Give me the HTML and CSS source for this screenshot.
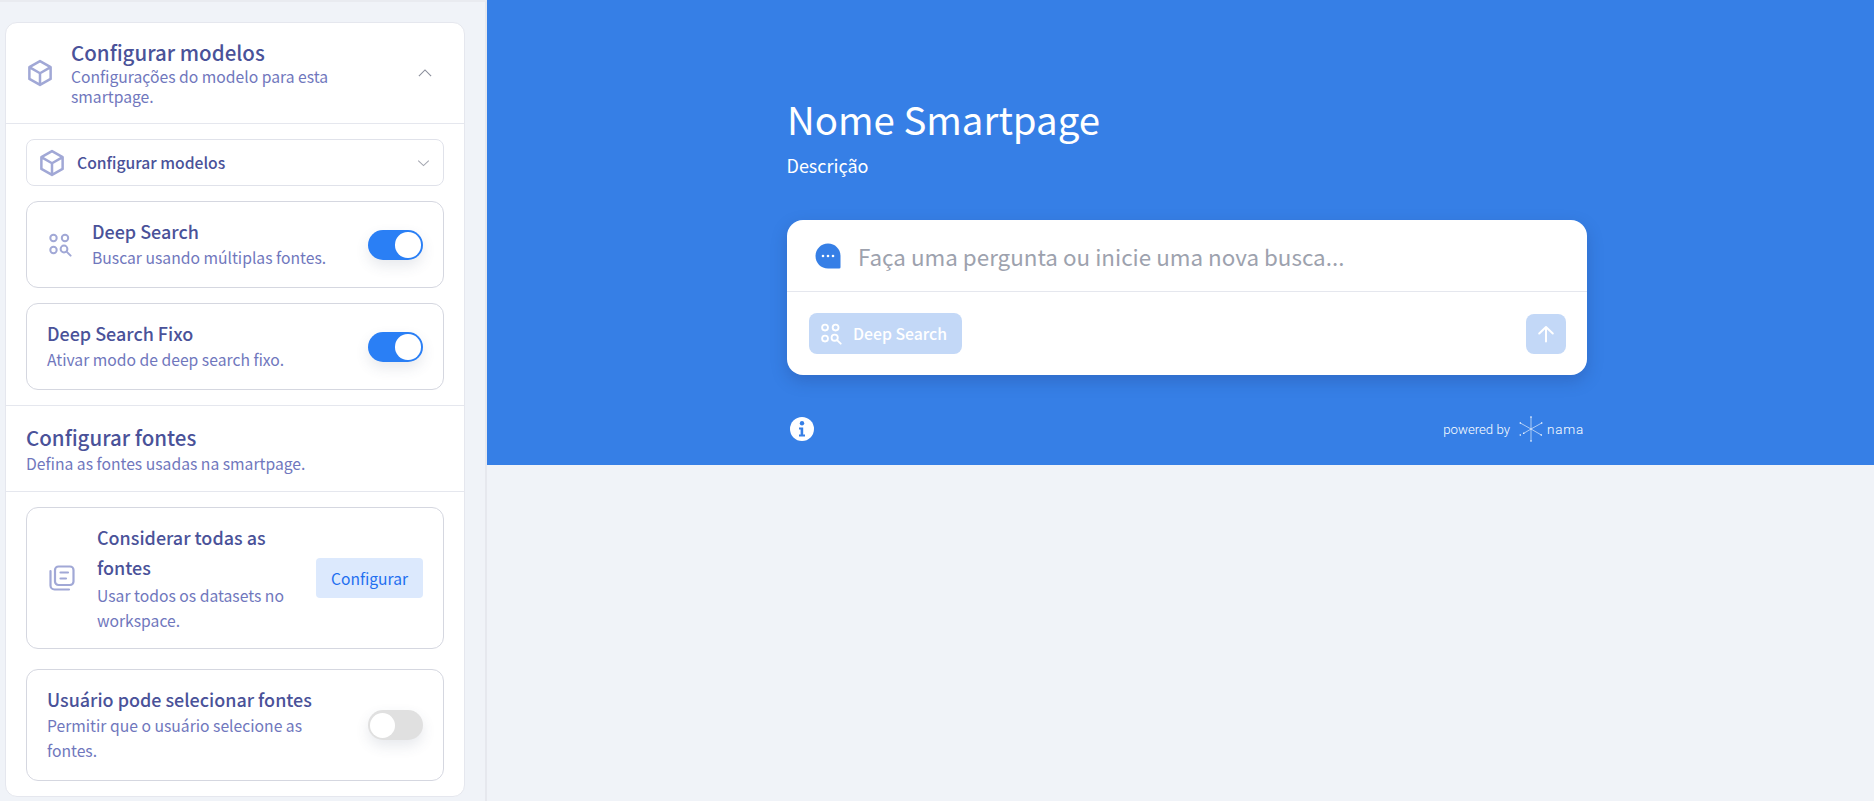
FILE: index.html
```html
<!DOCTYPE html>
<html lang="pt">
<head>
<meta charset="utf-8">
<title>Nome Smartpage</title>
<link rel="stylesheet" href="styles.css">
</head>
<body>
<svg class="defs" width="0" height="0" aria-hidden="true">
  <symbol id="cube" viewBox="0 0 24 24"><path d="M12 2.500 20.500 7.300v9.400L12 21.500l-8.500-4.800V7.300z M3.500 7.300l8.500 4.900 8.500-4.900 M12 12.200v9.300" fill="none" stroke="currentColor" stroke-width="2" stroke-linejoin="round"/></symbol>
  <symbol id="deep" viewBox="0 0 24 24"><g fill="none" stroke="currentColor" stroke-width="2"><circle cx="5.500" cy="5" r="3.200"/><circle cx="17" cy="5" r="3.200"/><circle cx="5.500" cy="17" r="3.200"/><circle cx="16" cy="16" r="3.400"/><path d="m18.600 18.600 4 4" stroke-linecap="round"/></g></symbol>
</svg>
<div class="layout">
  <aside class="sidebar">
    <section class="panel">
      <header class="panel-head">
        <svg class="ic-cube"><use href="#cube"/></svg>
        <div class="head-text">
          <h2 class="title">Configurar modelos</h2>
          <p class="desc">Configurações do modelo para esta smartpage.</p>
        </div>
        <svg class="chev chev-up" viewBox="0 0 16 10"><path d="M1 8.500 8 1.500 15 8.500" fill="none" stroke="currentColor" stroke-width="1.300"/></svg>
      </header>
      <div class="group">
        <div class="select">
          <svg class="ic-cube"><use href="#cube"/></svg>
          <span class="select-label">Configurar modelos</span>
          <svg class="chev chev-down" viewBox="0 0 16 10"><path d="M1.500 2 8 8.200 14.500 2" fill="none" stroke="currentColor" stroke-width="1.300"/></svg>
        </div>
        <div class="row row-deep">
          <svg class="ic-deep"><use href="#deep"/></svg>
          <div class="row-text">
            <div class="row-title">Deep Search</div>
            <div class="row-desc">Buscar usando múltiplas fontes.</div>
          </div>
          <span class="toggle on"><i></i></span>
        </div>
        <div class="row row-fixo">
          <div class="row-text">
            <div class="row-title">Deep Search Fixo</div>
            <div class="row-desc">Ativar modo de deep search fixo.</div>
          </div>
          <span class="toggle on"><i></i></span>
        </div>
      </div>
      <div class="sub-head">
        <h2 class="title">Configurar fontes</h2>
        <p class="desc">Defina as fontes usadas na smartpage.</p>
      </div>
      <div class="group group-fontes">
        <div class="row row-all">
          <svg class="ic-lib" viewBox="0 0 26 26"><g fill="none" stroke="currentColor" stroke-width="2.200" stroke-linecap="round" stroke-linejoin="round"><rect x="6" y="1.500" width="18.500" height="18.500" rx="3.500"/><path d="M11.500 7.500h7.500M11.500 13.500h5.500"/><path d="M1.500 6v14.500a4 4 0 0 0 4 4H20"/></g></svg>
          <div class="row-text">
            <div class="row-title">Considerar todas as fontes</div>
            <div class="row-desc">Usar todos os datasets no workspace.</div>
          </div>
          <button class="btn-config">Configurar</button>
        </div>
        <div class="row row-user">
          <div class="row-text">
            <div class="row-title">Usuário pode selecionar fontes</div>
            <div class="row-desc">Permitir que o usuário selecione as fontes.</div>
          </div>
          <span class="toggle"><i></i></span>
        </div>
      </div>
    </section>
  </aside>
  <main class="main">
    <div class="hero">
      <div class="hero-inner">
        <h1 class="hero-title">Nome Smartpage</h1>
        <p class="hero-desc">Descrição</p>
        <div class="search">
          <div class="search-top">
            <svg class="ic-chat" viewBox="0 0 26 26"><path d="M13 .5C6 .5.500 6 .500 13S6 25.500 13 25.500h11.200a1.300 1.300 0 0 0 1.300-1.300V13C25.500 6 20 .5 13 .5z" fill="#367fe6"/><g fill="#fff"><circle cx="8" cy="13" r="1.300"/><circle cx="13" cy="13" r="1.300"/><circle cx="18" cy="13" r="1.300"/></g></svg>
            <span class="placeholder">Faça uma pergunta ou inicie uma nova busca...</span>
          </div>
          <div class="search-bottom">
            <span class="chip"><svg class="ic-chip"><use href="#deep"/></svg>Deep Search</span>
            <span class="send"><svg viewBox="0 0 20 20"><path d="M10 17.500V3M3.200 9.500 10 3l6.800 6.500" fill="none" stroke="#fff" stroke-width="2" stroke-linecap="round" stroke-linejoin="round"/></svg></span>
          </div>
        </div>
        <div class="hero-foot">
          <svg class="ic-info" viewBox="0 0 24 24"><circle cx="12" cy="12" r="12" fill="#fff"/><circle cx="12" cy="6.300" r="2.200" fill="#367fe6"/><path d="M9 10.500h4.200v7H15v2H9v-2h1.600v-5H9z" fill="#367fe6"/></svg>
          <div class="powered">
            <span>powered by</span>
            <svg class="ic-nama" viewBox="0 0 26 26"><path d="M13 1v24M2.300 7 13 13l10.700-6M13 13 5.700 17.300M13 13l10.300 6" fill="none" stroke="#fff" stroke-width=".6"/><g fill="#fff"><circle cx="13" cy="1" r=".8"/><circle cx="13" cy="25" r=".8"/><circle cx="2.300" cy="7" r=".8"/><circle cx="23.700" cy="7" r=".8"/><circle cx="2.300" cy="19" r=".8"/><circle cx="5.700" cy="17.300" r=".8"/><circle cx="23.300" cy="19" r=".8"/></g></svg>
            <span class="nama">nama</span>
          </div>
        </div>
      </div>
    </div>
  </main>
</div>
</body>
</html>
```

FILE: styles.css
```css
* { box-sizing: border-box; }
html, body { margin: 0; padding: 0; height: 100%; overflow: hidden; }
body {
  background: #f0f3f8;
  font-family: "Noto Sans CJK JP", "Noto Sans", sans-serif;
  color: #4a5299;
}
h1, h2, p { margin: 0; }
.defs { position: absolute; }
.layout { display: flex; height: 801px; }

/* Sidebar */
.sidebar {
  width: 487px;
  flex: none;
  padding: 20px 20px 0 5px;
  border-top: 2px solid #e9ebf0;
  border-right: 2px solid #e6e8ee;
}
.panel {
  background: #fff;
  border: 1px solid #e5e7ee;
  border-radius: 12px;
  height: 775px;
  overflow: hidden;
}
.panel-head {
  display: flex;
  align-items: center;
  height: 101px;
  padding: 0 32px 0 19px;
  border-bottom: 1px solid #e5e7ee;
}
.ic-cube { width: 30px; height: 30px; color: #a1a8d6; flex: none; }
.head-text { margin-left: 16px; flex: 1; padding-right: 50px; }
.title {
  font-size: 20.500px;
  line-height: 26px;
  font-weight: 500;
  color: #4a5299;
  margin: -1px 0 1px;
}
.desc {
  font-size: 15.700px;
  line-height: 20px;
  font-weight: 400;
  color: #7077bd;
  margin-top: 2px;
}
.chev { height: 10px; flex: none; }
.chev-up { width: 14px; color: #8b8f9c; }
.chev-down { width: 13px; color: #a3a6b0; }

.group {
  display: flex;
  flex-direction: column;
  gap: 15px;
  padding: 15px 20px;
  border-bottom: 1px solid #e5e7ee;
}
.select {
  display: flex;
  align-items: center;
  height: 47px;
  padding: 0 13px 0 10px;
  border: 1px solid #e0e2ea;
  border-radius: 8px;
}
.select-label {
  flex: 1;
  margin-left: 10px;
  font-size: 15.700px;
  font-weight: 500;
  color: #4a5299;
}
.row {
  display: flex;
  align-items: center;
  border: 1px solid #d5d7e0;
  border-radius: 12px;
  background: #fff;
}
.row-deep { height: 87px; padding: 0 20px 0 21px; }
.row-fixo { height: 87px; padding: 0 20px; }
.row-all { height: 142px; padding: 0 20px 0 22px; }
.row-user { height: 112px; margin-top: 5px; padding: 0 20px; }
.ic-deep { width: 24px; height: 24px; color: #a1a8d6; flex: none; margin-right: 20px; }
.ic-lib { width: 26px; height: 26px; color: #a1a8d6; flex: none; margin-right: 22px; }
.row-text { flex: 1; min-width: 0; }
.row-title {
  font-size: 17.950px;
  line-height: 26px;
  font-weight: 500;
  color: #4a5299;
  margin: -1px 0 1px;
}
.row-desc {
  font-size: 15.700px;
  line-height: 25px;
  font-weight: 400;
  color: #7077bd;
}
.row-user .row-text { padding-right: 20px; }
.row-all .row-text { padding-right: 8px; }
.row-all .row-title { line-height: 30px; }

.toggle {
  position: relative;
  display: block;
  flex: none;
  width: 55px;
  height: 30px;
  border-radius: 15px;
  background: #e0e0e0;
  box-shadow: 0 6px 14px rgba(60, 70, 110, .12);
}
.toggle i {
  position: absolute;
  left: 1.500px;
  top: 2.500px;
  width: 25.500px;
  height: 25.500px;
  border-radius: 50%;
  background: #fff;
}
.toggle.on { background: #2a7ff5; }
.toggle.on i { left: 27px; }

.sub-head {
  height: 86px;
  padding: 19px 20px 0;
  border-bottom: 1px solid #e5e7ee;
}
.sub-head .desc { margin-top: 4px; }
.group-fontes { border-bottom: 0; }

.btn-config {
  flex: none;
  width: 107px;
  height: 40px;
  border: 0;
  border-radius: 4px;
  background: #dce9fd;
  color: #1f6ff0;
  font: 400 15.600px "Noto Sans CJK JP", sans-serif;
  padding: 0;
}

/* Hero */
.main { flex: 1; min-width: 0; }
.hero { background: #367fe6; height: 465px; }
.hero-inner { width: 800px; margin-left: 300px; padding-top: 90px; }
.hero-title {
  font-size: 38.400px;
  line-height: 56px;
  font-weight: 400;
  color: #fff;
}
.hero-desc {
  margin-top: 6px;
  font-size: 18px;
  line-height: 26px;
  color: #fff;
  margin-left: -.5px;
}
.search {
  margin-top: 42px;
  height: 155px;
  background: #fff;
  border-radius: 16px;
  box-shadow: 0 6px 16px rgba(30, 50, 110, .25);
}
.search-top {
  display: flex;
  align-items: center;
  height: 72px;
  padding-left: 28px;
  border-bottom: 1px solid #e5e7ee;
}
.ic-chat { width: 26px; height: 26px; flex: none; }
.placeholder {
  margin-left: 17px;
  font-size: 22.400px;
  line-height: 30px;
  color: #9da2ae;
}
.search-bottom {
  display: flex;
  align-items: center;
  justify-content: space-between;
  padding: 21px 21px 0 22px;
}
.chip {
  display: flex;
  align-items: center;
  gap: 11px;
  height: 41px;
  width: 153px;
  padding-left: 11px;
  border-radius: 8px;
  background: #c3d8f7;
  color: #fff;
  font-size: 15.800px;
  font-weight: 500;
}
.ic-chip { width: 22px; height: 22px; color: #fff; flex: none; }
.send {
  display: flex;
  align-items: center;
  justify-content: center;
  width: 40px;
  height: 40px;
  border-radius: 8px;
  background: #c3d8f7;
}
.send svg { width: 20px; height: 20px; }
.hero-foot {
  display: flex;
  align-items: center;
  justify-content: space-between;
  padding: 0 3px 0 3px;
  margin-top: 41px;
}
.ic-info { width: 24px; height: 24px; }
.powered {
  display: flex;
  align-items: center;
  color: #fff;
  font-family: Roboto, sans-serif;
  font-weight: 300;
  font-size: 13.200px;
}
.ic-nama { width: 26px; height: 26px; margin: 0 3px 0 8px; }
.nama { font-size: 13.500px; letter-spacing: .8px; }
```
